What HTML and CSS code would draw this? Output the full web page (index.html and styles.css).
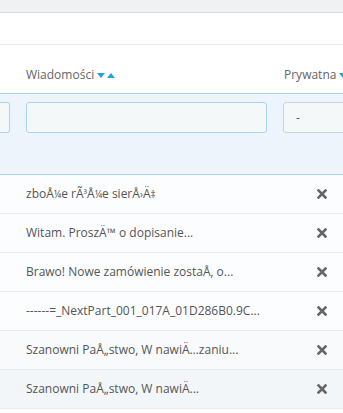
FILE: index.html
```html
<!DOCTYPE html>
<html lang="pl">
<head>
    <meta charset="UTF-8">
    <meta name="viewport" content="width=device-width, initial-scale=1.0">
    <title>Wiadomości</title>
    <link rel="stylesheet" href="styles.css">
</head>
<body>
    <div class="topbar"></div>
    <div class="panel-head"></div>

    <div class="list">
        <!-- naglowki -->
        <div class="row head">
            <div class="cell"></div>
            <div class="cell">Wiadomości <span class="sort down"></span><span class="sort up"></span></div>
            <div class="cell">Prywatna <span class="sort down"></span></div>
        </div>

        <!-- filtry -->
        <div class="row filter">
            <div class="cell"><input type="text" class="field first"></div>
            <div class="cell"><input type="text" class="field"></div>
            <div class="cell"><select class="field select"><option>-</option></select></div>
        </div>

        <div id="rows"></div>
    </div>

    <script>
        const wiadomosci = [
            "zboÅ¼e rÃ³Å¼e sierÅ›Ä‡",
            "Witam. ProszÄ™ o dopisanie...",
            "Brawo! Nowe zamówienie zostaÅ‚ o...",
            "------=_NextPart_001_017A_01D286B0.9C...",
            "Szanowni PaÅ„stwo, W nawiÄ…zaniu...",
            "Szanowni PaÅ„stwo, W nawiÄ..."
        ];

        const rows = document.getElementById("rows");
        wiadomosci.forEach((tekst, index) => {
            const row = document.createElement("div");
            row.className = "row item" + (index === 4 ? " alt" : "") + (index === 5 ? " hover" : "");
            // znaki z blednym kodowaniem sa w oryginale wezsze
            const html = tekst.replace(/[¼³›‡]/g, z => `<span class="glyph">${z}</span>`);
            row.innerHTML = `
                <div class="cell"></div>
                <div class="cell text">${html}</div>
                <div class="cell icon">
                    <svg width="10" height="10" viewBox="0 0 10 10"><path d="M1.5 1.5L8.5 8.5M8.5 1.5L1.5 8.5" stroke="#666" stroke-width="2.6" stroke-linecap="square"/></svg>
                </div>
            `;
            rows.appendChild(row);
        });
    </script>
</body>
</html>
```

FILE: styles.css
```css
* {
    margin: 0;
    padding: 0;
    box-sizing: border-box;
}

body {
    font-family: 'Open Sans', 'Liberation Sans', sans-serif;
    font-size: 12px;
    color: #555;
    background: #fff;
    overflow: hidden;
    width: 343px;
}

.topbar {
    height: 13px;
    background: #eff1f2;
    border-bottom: 1px solid #d3dbe0;
}

.panel-head {
    height: 32px;
    background: #fff;
    border-bottom: 1px solid #e9ecee;
}

.list {
    width: 369px;
}

.row {
    display: grid;
    grid-template-columns: 18px 257px 94px;
}

.head {
    height: 49px;
    border-bottom: 1px solid #a8d5ee;
    color: #666;
}

.head .cell {
    display: flex;
    align-items: flex-end;
    padding: 0 8px 10px;
    white-space: nowrap;
}

.head .cell:last-child {
    padding-left: 9px;
}

.sort {
    display: inline-block;
    width: 0;
    height: 0;
    border-left: 4px solid transparent;
    border-right: 4px solid transparent;
    margin-bottom: 5px;
}

.sort.down {
    border-top: 5px solid #1fa4dc;
    margin-left: 3px;
}

.sort.up {
    border-bottom: 5px solid #1fa4dc;
    margin-left: 2px;
}

.filter {
    height: 81px;
    background: #edf4fb;
    border-bottom: 1px solid #a8d5ee;
}

.filter .cell {
    padding: 8px 8px 0;
    min-width: 0;
}

.filter .cell:first-child {
    padding: 8px 8px 0 0;
}

.field {
    display: block;
    width: 100%;
    min-width: 0;
    height: 31px;
    border: 1px solid #a8d5ee;
    border-radius: 3px;
    background: #f5f8f9;
    font-family: 'Open Sans', sans-serif;
    font-size: 12px;
    color: #555;
    padding: 0 12px;
    appearance: none;
    -webkit-appearance: none;
    outline: none;
}

.field.first {
    width: 10px;
    padding: 0;
    border-left: none;
    border-radius: 0 3px 3px 0;
}

.select {
    border-color: #c7d6db;
}

.item {
    height: 39px;
    border-bottom: 1px solid #e9ecee;
    background: #fcfdfe;
}

.item.alt {
    background: #f8fafb;
}

.item.hover {
    background: #f3f6f8;
}

.item .cell {
    display: flex;
    align-items: center;
}

.item .text {
    display: block;
    line-height: 38px;
    padding-left: 8px;
    white-space: nowrap;
    overflow: hidden;
}

.glyph {
    font-size: 10px;
}

.item .icon {
    justify-content: center;
}
```
